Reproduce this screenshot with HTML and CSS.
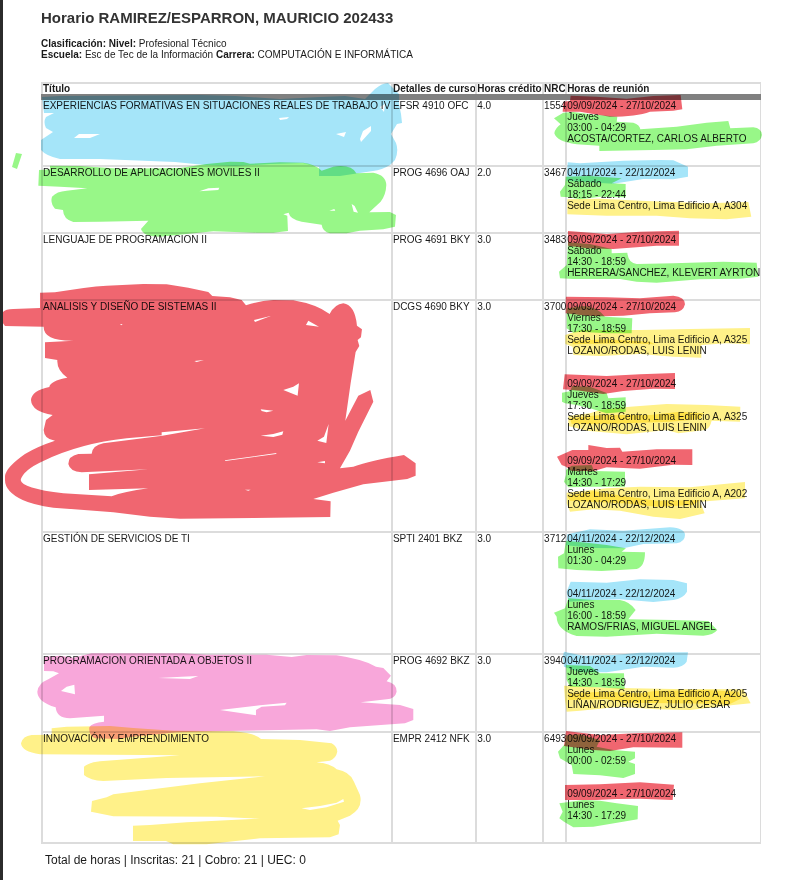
FILE: index.html
```html
<!DOCTYPE html>
<html lang="es">
<head>
<meta charset="utf-8">
<meta name="viewport" content="width=device-width, initial-scale=1">
<title>Horario</title>
<link rel="stylesheet" href="styles.css">
</head>
<body>
<main class="page">
  <h1 class="title">Horario RAMIREZ/ESPARRON, MAURICIO 202433</h1>
  <p class="info"><b>Clasificación:</b> <b>Nivel:</b> Profesional Técnico<br><b>Escuela:</b> Esc de Tec de la Información <b>Carrera:</b> COMPUTACIÓN E INFORMÁTICA</p>

  <table class="schedule">
    <colgroup><col class="c-title"><col class="c-course"><col class="c-credit"><col class="c-nrc"><col class="c-meet"></colgroup>
    <thead>
      <tr><th scope="col">Título</th><th scope="col">Detalles de curso</th><th scope="col">Horas crédito</th><th scope="col">NRC</th><th scope="col">Horas de reunión</th></tr>
    </thead>
    <tbody>
      <tr><td>EXPERIENCIAS FORMATIVAS EN SITUACIONES REALES DE TRABAJO IV</td><td>EFSR 4910 OFC</td><td>4.0</td><td>1554</td>
        <td><p>09/09/2024 - 27/10/2024<br>Jueves<br>03:00 - 04:29<br>ACOSTA/CORTEZ, CARLOS ALBERTO</p></td></tr>
      <tr><td>DESARROLLO DE APLICACIONES MOVILES II</td><td>PROG 4696 OAJ</td><td>2.0</td><td>3467</td>
        <td><p>04/11/2024 - 22/12/2024<br>Sábado<br>18:15 - 22:44<br>Sede Lima Centro, Lima Edificio A, A304</p></td></tr>
      <tr><td>LENGUAJE DE PROGRAMACION II</td><td>PROG 4691 BKY</td><td>3.0</td><td>3483</td>
        <td><p>09/09/2024 - 27/10/2024<br>Sábado<br>14:30 - 18:59<br>HERRERA/SANCHEZ, KLEVERT AYRTON</p></td></tr>
      <tr><td>ANALISIS Y DISEÑO DE SISTEMAS II</td><td>DCGS 4690 BKY</td><td>3.0</td><td>3700</td>
        <td><p>09/09/2024 - 27/10/2024<br>Viernes<br>17:30 - 18:59<br>Sede Lima Centro, Lima Edificio A, A325<br>LOZANO/RODAS, LUIS LENIN</p>
        <p>09/09/2024 - 27/10/2024<br>Jueves<br>17:30 - 18:59<br>Sede Lima Centro, Lima Edificio A, A325<br>LOZANO/RODAS, LUIS LENIN</p>
        <p>09/09/2024 - 27/10/2024<br>Martes<br>14:30 - 17:29<br>Sede Lima Centro, Lima Edificio A, A202<br>LOZANO/RODAS, LUIS LENIN</p></td></tr>
      <tr><td>GESTIÓN DE SERVICIOS DE TI</td><td>SPTI 2401 BKZ</td><td>3.0</td><td>3712</td>
        <td><p>04/11/2024 - 22/12/2024<br>Lunes<br>01:30 - 04:29</p>
        <p>04/11/2024 - 22/12/2024<br>Lunes<br>16:00 - 18:59<br>RAMOS/FRIAS, MIGUEL ANGEL</p></td></tr>
      <tr><td>PROGRAMACION ORIENTADA A OBJETOS II</td><td>PROG 4692 BKZ</td><td>3.0</td><td>3940</td>
        <td><p>04/11/2024 - 22/12/2024<br>Jueves<br>14:30 - 18:59<br>Sede Lima Centro, Lima Edificio A, A205<br>LIÑAN/RODRIGUEZ, JULIO CESAR</p></td></tr>
      <tr><td>INNOVACIÓN Y EMPRENDIMIENTO</td><td>EMPR 2412 NFK</td><td>3.0</td><td>6493</td>
        <td><p>09/09/2024 - 27/10/2024<br>Lunes<br>00:00 - 02:59</p>
        <p>09/09/2024 - 27/10/2024<br>Lunes<br>14:30 - 17:29</p></td></tr>
    </tbody>
  </table>

  <p class="totals">Total de horas | Inscritas: 21 | Cobro: 21 | UEC: 0</p>

  <!-- Marker strokes laid over the schedule -->
  <svg class="marks" viewBox="3 0 794 880" preserveAspectRatio="none" aria-hidden="true">
    <path class="blue" d="M42 97L60 96 200 95 235 96 280 99 320 97 345 96 365 99 375 89Q382 83 388 83L393 88 399 94 399 104 401 114 402 123 397 124 391 134 396 143Q399 151 395 160L390 165Q382 170 373 171L340 176 319 176 319 167 303 163 270 164 235 166 205 165 175 162 100 159 60 159Q46 156 41 150L41 140 53 132 46 128Q43 122 46 117L54 113 44 113ZM279 118L289 117 287 119 280 120ZM74 138L79 134 100 134 90 138ZM336 134L346 132 344 137ZM360 139L363 131 371 126 371 131 361 142ZM380 107L385 104 384 112Z"/>
    <path class="green" d="M16 153L22 154 17 169 12 167Z"/>
    <g transform="translate(0 150) scale(.3333)">
      <path class="green" d="M117 60L150 58 150 47 240 48 360 56 540 54 620 42 690 35 730 36 750 41 840 37 910 38Q945 42 965 62L1000 50Q1055 42 1069 70L1120 68Q1158 75 1159 105 1158 135 1142 155L1108 187 1170 186 1188 195 1185 230 1150 238 1080 242 1040 250 990 250Q968 245 965 224L905 215Q870 208 866 188L850 193 862 197 864 243 820 248 770 248 640 244 480 260Q430 260 423 237L445 212 300 215 220 216Q190 208 189 180L165 176Q150 160 156 140 170 124 200 122L262 115 180 110 115 107ZM598 124L625 115 658 113 655 120ZM1055 162L1064 168 1074 188 1061 185ZM988 182L1003 177 1006 182Z"/>
    </g>
    <g transform="translate(0 280) scale(.3333)">
      <path class="red" d="M120 38L165 37Q260 20 320 17L430 12 500 13 565 23 625 36 637 48 690 52 725 60 738 76Q775 63 820 60L880 61Q950 73 989 102 1005 72 1030 70 1065 75 1071 137L1086 148 1083 172 1073 180 1078 198 1067 216 1052 310 1036 422 1075 347 1111 330 1120 365 1075 455 1050 512 1020 565 1060 560Q1110 542 1212 525L1247 550 1247 587 1222 597 1090 613 1000 638 940 657 992 664 991 711 760 714 540 716 450 710 340 697 160 683Q100 675 68 660 15 635 15 600V588Q18 562 75 522 110 500 165 482 132 478 131 450L138 420 158 405Q95 395 93 360 95 332 148 321 150 303 202 293 170 270 172 240L135 234 135 187 222 182Q130 184 131 140L15 138 8 128 8 97Q15 87 40 87L120 84ZM62 600Q70 570 130 543 240 490 380 475L485 466V457L615 445 487 467 310 490Q278 496 275 521L235 522Q205 528 205 552 210 575 245 577L445 568 267 583V630L445 625Q370 635 335 649L190 640Q65 625 62 600ZM762 120L812 108 765 126ZM918 135L925 122 957 140ZM360 133L368 132 364 136ZM583 243L612 240 590 246ZM850 330L880 320 897 310 893 347ZM782 388L820 392 800 397 785 393ZM782 467L820 462 850 454 847 464 820 471ZM952 482L972 470 986 432 979 489ZM675 541L830 519 828 522 676 543ZM952 547L975 543 975 550ZM735 629L752 629 745 632Z"/>
    </g>
    <g transform="translate(0 520) scale(.3333)">
      <path class="pink" d="M132 410L180 407 220 413 275 400 550 400 620 404 800 404 875 411 920 405 1010 406Q1090 418 1128 440L1150 444 1173 467 1160 484Q1190 490 1190 515 1185 537 1160 538L1082 547 1200 555 1240 567V600L1215 610 1050 622 990 633 950 628 640 634 530 637 400 650 350 657 285 655Q265 645 268 622 275 608 312 605V587L210 595Q170 595 167 562 112 545 112 515 115 490 145 478L177 460 160 454 132 453ZM475 474L545 470 595 468 570 477ZM183 513L200 500 223 494 225 523ZM660 570L780 556 860 548 855 556 785 560 768 570 768 586Z"/>
    </g>
    <g transform="translate(0 700) scale(.3333)">
      <path class="yellow" d="M155 85L200 80 330 78 400 84 520 92 700 94Q770 100 783 117L900 120 995 130Q1012 140 1012 155 1008 175 990 182L950 187Q990 190 1010 208 1050 215 1062 245L1080 285Q1090 325 1050 347L1013 362 1020 375 1016 403 990 412 780 415 620 433 520 433 498 423 399 423 399 377 450 375 560 367 780 356 650 350 340 349 273 335 276 303 320 292 340 283 600 250 795 229 500 234 310 243Q270 242 252 225V200Q265 188 300 184L540 166 120 163Q65 155 63 130 68 108 95 105L155 104ZM905 325L960 318 1010 308 1030 297 1032 305 980 322 930 330Z"/>
    </g>
    <g transform="translate(540 80) scale(.3333)">
      <path class="red" d="M70 65L90 63 92 47 170 50 260 56 340 48 422 45 427 88 400 92 330 95Q290 110 210 110L120 95 68 95Z"/>
      <path class="green" d="M42 115L70 98 100 96 150 103 232 110 230 125 280 128Q300 135 301 148L410 140 500 128 565 123 571 145 640 142Q665 145 666 165 663 185 640 190L530 197 440 208 340 210 178 213V197L110 193Q50 185 43 160 45 145 62 133Z"/>
      <path class="blue" d="M83 247L120 250 250 242 360 240 400 241 444 260V290L400 298 310 297 220 311 80 303Z"/>
      <path class="green" d="M77 290L150 288 245 295 215 310 257 312V352L180 350 120 358 85 352 62 350 60 335 75 315Z"/>
      <path class="yellow" d="M82 358L180 356 300 362 500 370 625 366 634 410 560 418 450 415 350 407 200 407 82 403Z"/>
      <path class="red" d="M84 453L200 462 300 455 417 452V497L350 497 220 507 140 505 84 497Z"/>
      <path class="green" d="M84 487L150 492 215 507V520L262 518Q265 550 290 552L400 550 550 545 650 548 655 590 600 596 480 598 350 608 290 605 240 597 100 597 60 595 57 575 80 555Z"/>
    </g>
    <g transform="translate(540 290) scale(.3333)">
      <path class="red" d="M77 30L78 20 200 22 300 25 400 17Q435 20 435 43 430 65 405 67L330 70 250 77 190 79 140 77 77 70Z"/>
      <path class="green" d="M80 55L130 48Q172 50 195 80L277 85 275 130 200 130 120 125 100 128 80 115Z"/>
      <path class="yellow" d="M76 135L120 120 300 120 450 117 630 114V163L560 160 484 165V203L400 200 300 192 180 198 100 195 98 170 76 162Z"/>
      <path class="yellow" d="M97 152L200 148 330 155 345 163 250 160 97 163Z"/>
      <path class="red" d="M74 253L200 258 300 253 405 249V297L340 296 250 303 190 312 120 302 69 298Z"/>
      <path class="green" d="M66 308L90 304 97 288 150 290 200 309 205 325 257 322V365L200 370 150 355 110 345 75 340 66 335Z"/>
      <path class="yellow" d="M85 378L150 370 180 360 270 350 380 342 500 345 601 350 600 395 515 392Q510 415 495 420L415 430 380 420 260 433 140 422 85 408Z"/>
      <path class="yellow" d="M90 385L180 375 330 375 420 365 490 370 480 388 390 395 200 402 95 402Z"/>
      <path class="red" d="M51 500L97 480 145 480V465L200 474 240 473 247 485 350 478 457 478V525L400 524 300 536 200 532 162 543 95 543 78 530 65 525Z"/>
      <path class="green" d="M78 540L95 527 155 525 162 543 255 545V590L160 590 85 592 72 575 78 555Z"/>
      <path class="yellow" d="M80 608L200 595 300 590 450 592 615 576V625L480 635 494 670 420 687 340 680 240 662 160 658 90 665 80 640Z"/>
      <path class="yellow" d="M82 618L160 603 250 618 350 632 480 630 460 645 350 650 250 640 90 632Z"/>
    </g>
    <g transform="translate(540 520) scale(.3333)">
      <path class="blue" d="M82 43L150 28 250 32 390 22Q435 25 435 45 435 65 410 70L310 72 250 85 160 84 78 76Z"/>
      <path class="green" d="M78 62L140 68 200 75 258 85 245 95 315 97Q315 140 290 147L185 153 110 150 55 145 54 110 72 100Z"/>
      <path class="blue" d="M92 185L200 188 300 178 400 180 441 190V215Q430 235 400 240L340 246 240 238 170 240 85 245 80 215Z"/>
      <path class="green" d="M85 235L160 240 240 240Q270 245 287 270L265 298 400 300 505 303 532 330Q520 345 490 347L350 341 200 350 110 348Q50 330 50 290L42 278 75 265Z"/>
      <path class="blue" d="M72 395L130 407 220 405 300 398 444 397 440 425Q430 442 400 443L310 440 200 457 120 457 72 440 68 412Z"/>
      <path class="green" d="M78 435L150 438 180 460 252 460 254 507 180 502 90 500 80 480Z"/>
      <path class="yellow" d="M72 497L95 498 200 503 400 507 610 508 622 530 632 550 580 555 450 570 350 568 240 560 120 572 80 575 75 540Z"/>
      <path class="yellow" d="M85 520L190 515 300 520 350 512 500 510 595 515 605 535 570 552 400 550 250 548 200 537 85 540Z"/>
    </g>
    <g transform="translate(540 650) scale(.3333)">
      <path class="red" d="M78 243L180 255 300 249 427 247V293L280 292 210 303 160 300 72 288Z"/>
      <path class="green" d="M78 256L120 253 180 270 170 290 220 300 285 305V325L265 335 285 342V372L250 384 180 376 100 372 95 345 60 325 54 305 75 282Z"/>
      <path class="red" d="M75 405L180 403 300 397 402 404 398 450 300 446 230 447 170 450 75 450Z"/>
      <path class="green" d="M58 460L130 450 180 452 230 460 294 468 293 508 240 517 160 530 100 532 72 515 58 505 68 485Z"/>
    </g>
  </svg>
</main>
</body>
</html>
```
FILE: styles.css
```css
* {
  box-sizing: border-box;
}

body {
  margin: 0;
  border-left: 3px solid #2b2b2b;
  background: #fff;
  color: #1a1a1a;
  font-family: "Liberation Sans", Arial, sans-serif;
  font-size: 10px;
  line-height: 11px;
}

.page {
  position: relative;
  min-height: 100vh;
  padding: 8px 36px 0 38px;
}

.title {
  margin: 0 0 10px;
  font-size: 15px;
  line-height: 20px;
  color: #333;
}

.info {
  margin: 0 0 22px;
}

.schedule {
  width: 100%;
  table-layout: fixed;
  border-spacing: 0;
  white-space: nowrap;
}

.c-title { width: 48.6%; }
.c-course { width: 11.7%; }
.c-credit { width: 9.3%; }
.c-nrc { width: 3.2%; }
.c-meet { width: 27.2%; }

.schedule th {
  position: relative;
  height: 12px;
  padding: 0;
  border-top: 2px solid #dcdcdc;
  border-left: 2px solid #dcdcdc;
  box-shadow: 0 6px 0 #808080;
  line-height: 10px;
  text-align: left;
}

.schedule td {
  padding: 0;
  border-bottom: 2px solid #dcdcdc;
  border-left: 2px solid #dcdcdc;
  vertical-align: top;
}

.schedule th:last-child,
.schedule td:last-child {
  border-right: 1px solid #dcdcdc;
}

.schedule tbody tr:first-child td {
  padding-top: 6px;
}

.schedule p {
  margin: 0 0 22px;
}

.schedule p:last-child {
  margin-bottom: 21px;
}

.totals {
  margin: 8px 4px 0;
  font-size: 12px;
  line-height: 16px;
}

.marks {
  position: absolute;
  inset: 0;
  width: 100%;
  height: 100%;
  mix-blend-mode: multiply;
  pointer-events: none;
}

.marks path {
  fill-rule: evenodd;
  mix-blend-mode: multiply;
}

.blue { fill: #a5e5f9; }
.green { fill: #98f788; }
.red { fill: #f06670; }
.pink { fill: #f8a7da; }
.yellow { fill: #fff189; }
```
